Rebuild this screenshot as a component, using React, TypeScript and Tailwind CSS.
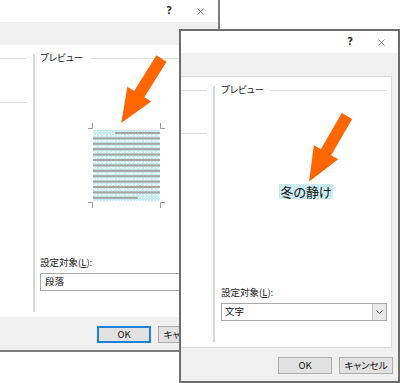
import { X } from "lucide-react";

const jp = "font-['Noto_Sans_CJK_JP',sans-serif] [font-feature-settings:'palt']";

function TitleBar({ gap, pr }: { gap: string; pr: string }) {
  return (
    <div className={`flex h-[22px] shrink-0 items-center justify-end bg-white ${pr}`}>
      <span className="font-['DejaVu_Sans',sans-serif] text-[10px] font-bold leading-none text-[#333]">?</span>
      <X className={gap} size={11} strokeWidth={1.2} color="#222" />
    </div>
  );
}

function Button({ label, focused }: { label: string; focused?: boolean }) {
  return (
    <div
      className={`flex h-[17px] w-[54px] items-center justify-center bg-[#e1e1e1] text-[9.5px] text-[#111] ${jp} ${
        focused ? "border-2 border-[#1e81d8]" : "border border-[#adadad]"
      }`}
    >
      {label}
    </div>
  );
}

function Label() {
  return (
    <div className={`text-[9.5px] leading-none text-[#222] ${jp}`}>
      設定対象(<span className="underline">L</span>):
    </div>
  );
}

// tiny picture of shaded paragraph lines
function ParagraphPreview() {
  const rows = Array.from({ length: 13 }, (_, i) => i);
  return (
    <svg width="81" height="89" viewBox="0 0 81 89">
      <defs>
        <pattern id="dots" width="3" height="3" patternUnits="userSpaceOnUse">
          <rect width="3" height="3" fill="#c4ebf0" />
          <rect x="1" y="1" width="1" height="1" fill="#ffffff" />
        </pattern>
      </defs>
      <rect x="7" y="9" width="67" height="71" fill="url(#dots)" />
      {rows.map((i) => {
        const y = 11 + i * 5.4;
        const x1 = i === 0 ? 29 : 7;
        const x2 = i === 12 ? 52 : 74;
        return (
          <g key={i}>
            <rect x={x1} y={y} width={x2 - x1} height="2" fill="#a3a3a3" />
            {i < 12 && (
              <line
                x1="8"
                x2="74"
                y1={y + 3.7}
                y2={y + 3.7}
                stroke="#ffffff"
                strokeWidth="1"
                strokeDasharray="3 1.5"
              />
            )}
          </g>
        );
      })}
      <g stroke="#9a9a9a" strokeWidth="1" fill="none">
        <path d="M2 7.5 H6.5 V2" />
        <path d="M79 7.5 H74.5 V2" />
        <path d="M2 81.5 H6.5 V87" />
        <path d="M79 81.5 H74.5 V87" />
      </g>
    </svg>
  );
}

function Arrow({ x, y, angle }: { x: number; y: number; angle: number }) {
  return (
    <polygon
      points="-6,0 6,0 6,42 14,42 0,76 -14,42 -6,42"
      fill="#ff6600"
      transform={`translate(${x} ${y}) rotate(${angle})`}
    />
  );
}

export default function App() {
  return (
    <div className="relative h-[383px] w-[400px] overflow-hidden bg-white">
      {/* back dialog */}
      <div className="absolute left-0 top-0 flex h-[352px] w-[220px] flex-col border-b-2 border-r-2 border-[#7d7d7d] bg-[#f0f0f0]">
        <TitleBar gap="ml-[23px]" pr="pr-[12px]" />
        <div className="h-[23px] shrink-0" />
        <div className="flex h-[272px] shrink-0 bg-white">
          <div className="w-[26px] pt-[13px]">
            <div className="h-px bg-[#dcdcdc]" />
            <div className="mt-[43px] h-px bg-[#dcdcdc]" />
          </div>
          <div className="mb-[5px] ml-[7px] mt-[9px] w-[2px] bg-[#d6d6d6]" />
          <div className="flex flex-1 flex-col pl-[5px]">
            <div className="mt-[8px] flex h-[10px] items-center">
              <span className={`text-[9.5px] leading-none text-[#222] ${jp}`}>プレビュー</span>
              <div className="ml-[8px] h-px flex-1 bg-[#dcdcdc]" />
            </div>
            <div className="ml-[46px] mt-[58px]">
              <ParagraphPreview />
            </div>
            <div className="mt-[48px]">
              <Label />
            </div>
            <div className={`mt-[5px] flex h-[18px] items-center border border-[#a9a9a9] pl-[4px] text-[9.5px] text-[#111] ${jp}`}>
              段落
            </div>
          </div>
        </div>
        <div className="flex flex-1 items-start gap-[7px] pl-[97px] pt-[9px]">
          <Button label="OK" focused />
          <Button label="キャンセル" />
        </div>
      </div>

      {/* front dialog */}
      <div className="absolute left-[179px] top-[29px] flex h-[354px] w-[221px] flex-col border-2 border-[#6d6d6d] bg-[#f0f0f0]">
        <TitleBar gap="ml-[23px]" pr="pr-[11px]" />
        <div className="h-[23px] shrink-0" />
        <div className="mr-[6px] flex h-[272px] shrink-0 border-y border-r border-[#dadada] bg-white">
          <div className="w-[26px] pt-[13px]">
            <div className="h-px bg-[#dcdcdc]" />
            <div className="mt-[42px] h-px bg-[#dcdcdc]" />
          </div>
          <div className="mb-[5px] ml-[6px] mt-[9px] w-[2px] bg-[#d6d6d6]" />
          <div className="flex flex-1 flex-col pl-[6px] pr-[4px]">
            <div className="mt-[8px] flex h-[10px] items-center">
              <span className={`text-[9.5px] leading-none text-[#222] ${jp}`}>プレビュー</span>
              <div className="ml-[6px] h-px flex-1 bg-[#dcdcdc]" />
            </div>
            <div className="mt-[89px] flex justify-center pl-[4px]">
              <span
                className={`bg-[#c4ebf0] bg-[radial-gradient(circle,#ffffff_0.6px,transparent_0.9px)] bg-[length:3px_3px] px-px text-[13px] leading-[15px] text-[#111] ${jp}`}
              >
                冬の静け
              </span>
            </div>
            <div className="mt-[89px]">
              <Label />
            </div>
            <div className={`mt-[5px] flex h-[18px] items-center border border-[#a9a9a9] pl-[3px] text-[9.5px] text-[#111] ${jp}`}>
              <span className="flex-1">文字</span>
              <div className="flex h-full w-[14px] items-center justify-center border-l border-[#c2c2c2] bg-[#e9e9e9]">
                <svg width="7" height="4" viewBox="0 0 7 4">
                  <path d="M0.5 0.5 L3.5 3.5 L6.5 0.5" stroke="#555" strokeWidth="1" fill="none" />
                </svg>
              </div>
            </div>
          </div>
        </div>
        <div className="flex flex-1 items-start justify-end gap-[7px] pr-[5px] pt-[9px]">
          <Button label="OK" />
          <Button label="キャンセル" />
        </div>
      </div>

      {/* callout arrows */}
      <svg className="pointer-events-none absolute left-0 top-0" width="400" height="383">
        <Arrow x={161.5} y={58.5} angle={32} />
        <Arrow x={347} y={116} angle={30} />
      </svg>
    </div>
  );
}
